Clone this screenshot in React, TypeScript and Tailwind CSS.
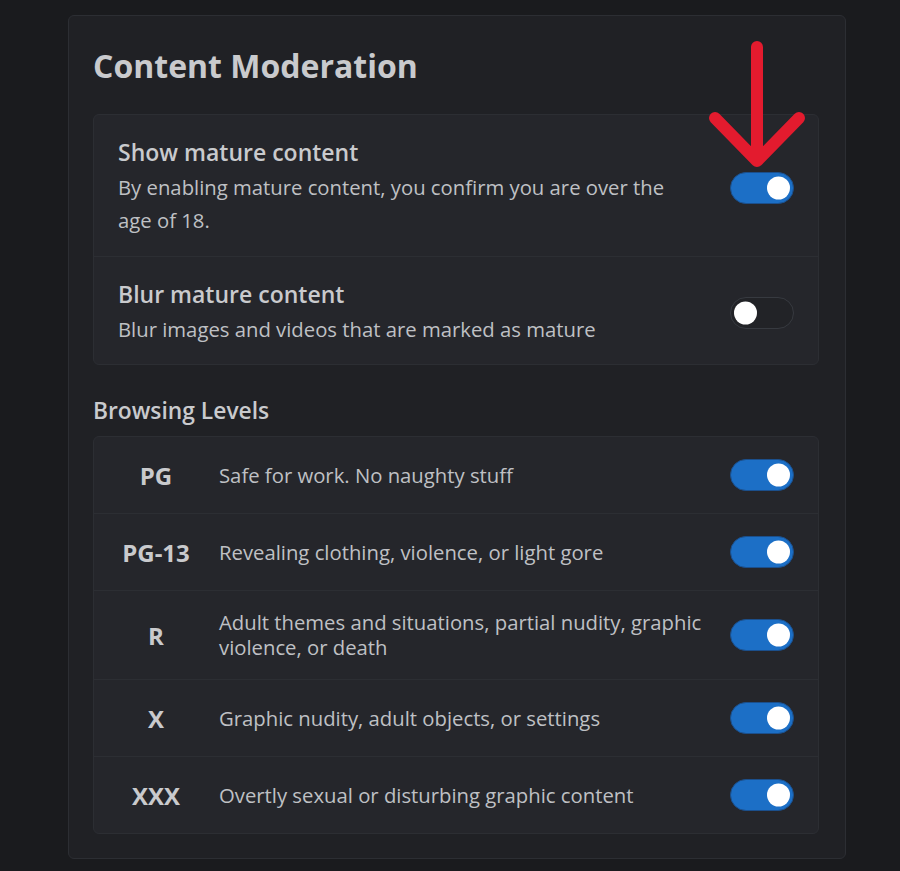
import React from "react";

function Toggle({ on }: { on: boolean }) {
  if (on) {
    return (
      <div className="relative h-[32px] w-[64px] shrink-0 rounded-full border border-[#1b4f8c] bg-[#1c6fc6]">
        <div className="absolute right-[3px] top-1/2 h-[23px] w-[23px] -translate-y-1/2 rounded-full bg-white" />
      </div>
    );
  }
  return (
    <div className="relative h-[32px] w-[64px] shrink-0 rounded-full border border-[#373a40] bg-[#222327]">
      <div className="absolute left-[3px] top-1/2 h-[23px] w-[23px] -translate-y-1/2 rounded-full bg-white" />
    </div>
  );
}

const levels = [
  { label: "PG", desc: "Safe for work. No naughty stuff" },
  { label: "PG-13", desc: "Revealing clothing, violence, or light gore" },
  { label: "R", desc: "Adult themes and situations, partial nudity, graphic violence, or death" },
  { label: "X", desc: "Graphic nudity, adult objects, or settings" },
  { label: "XXX", desc: "Overtly sexual or disturbing graphic content" },
];

export default function App() {
  return (
    <div
      className="relative min-h-[871px] w-[900px] bg-[#1a1b1e] pl-[68px] pt-[15px]"
      style={{ fontFamily: '"Open Sans", "Noto Sans", sans-serif' }}
    >
      <div className="flex w-[778px] flex-col rounded-[6px] border border-[#2c2e33] bg-[#202125] pb-[24px] pl-[24px] pr-[26px] pt-[30px]">
        <h1 className="mb-[28px] text-[32px] font-bold leading-[40px] text-[#c9cacd]">Content Moderation</h1>

        <div className="flex flex-col rounded-[6px] border border-[#2c2e33] bg-[#25262b]">
          <div className="flex items-center justify-between pb-[19px] pl-[24px] pr-[24px] pt-[23px]">
            <div className="flex w-[580px] flex-col">
              <div className="text-[23px] font-semibold leading-[28px] text-[#c9cacd]">Show mature content</div>
              <div className="mt-[5px] text-[20.3px] leading-[33px] text-[#bfc0c4]">
                By enabling mature content, you confirm you are over the age of 18.
              </div>
            </div>
            <Toggle on={true} />
          </div>
          <div className="flex items-center justify-between border-t border-[#2c2e33] pb-[18px] pl-[24px] pr-[24px] pt-[23px]">
            <div className="flex flex-col">
              <div className="text-[23px] font-semibold leading-[28px] text-[#c9cacd]">Blur mature content</div>
              <div className="mt-[5px] text-[20.3px] leading-[33px] text-[#bfc0c4]">
                Blur images and videos that are marked as mature
              </div>
            </div>
            <Toggle on={false} />
          </div>
        </div>

        <h2 className="mb-[11px] mt-[32px] text-[22.8px] font-semibold leading-[28px] text-[#c9cacd]">Browsing Levels</h2>

        <div className="flex flex-col rounded-[6px] border border-[#2c2e33] bg-[#25262b]">
          {levels.map((l, i) => (
            <div
              key={l.label}
              className={
                i === 0
                  ? "flex min-h-[76px] items-center py-[19px] pl-[24px] pr-[24px]"
                  : "flex min-h-[77px] items-center border-t border-[#2c2e33] py-[19px] pl-[24px] pr-[24px]"
              }
            >
              <div className="w-[76px] shrink-0 text-center text-[24px] font-bold leading-[25px] text-[#c9cacd]">
                {l.label}
              </div>
              <div className="ml-[25px] flex-1 pr-[20px] text-[20.3px] leading-[25px] text-[#bfc0c4]">{l.desc}</div>
              <Toggle on={true} />
            </div>
          ))}
        </div>
      </div>

      <svg
        className="pointer-events-none absolute left-[700px] top-[35px]"
        width="115"
        height="140"
        viewBox="0 0 115 140"
        fill="none"
      >
        <path
          d="M57 12 L57 124 M15 83 L57 126 L99 83"
          stroke="#e31b2e"
          strokeWidth="12"
          strokeLinecap="round"
          strokeLinejoin="round"
        />
      </svg>
    </div>
  );
}
